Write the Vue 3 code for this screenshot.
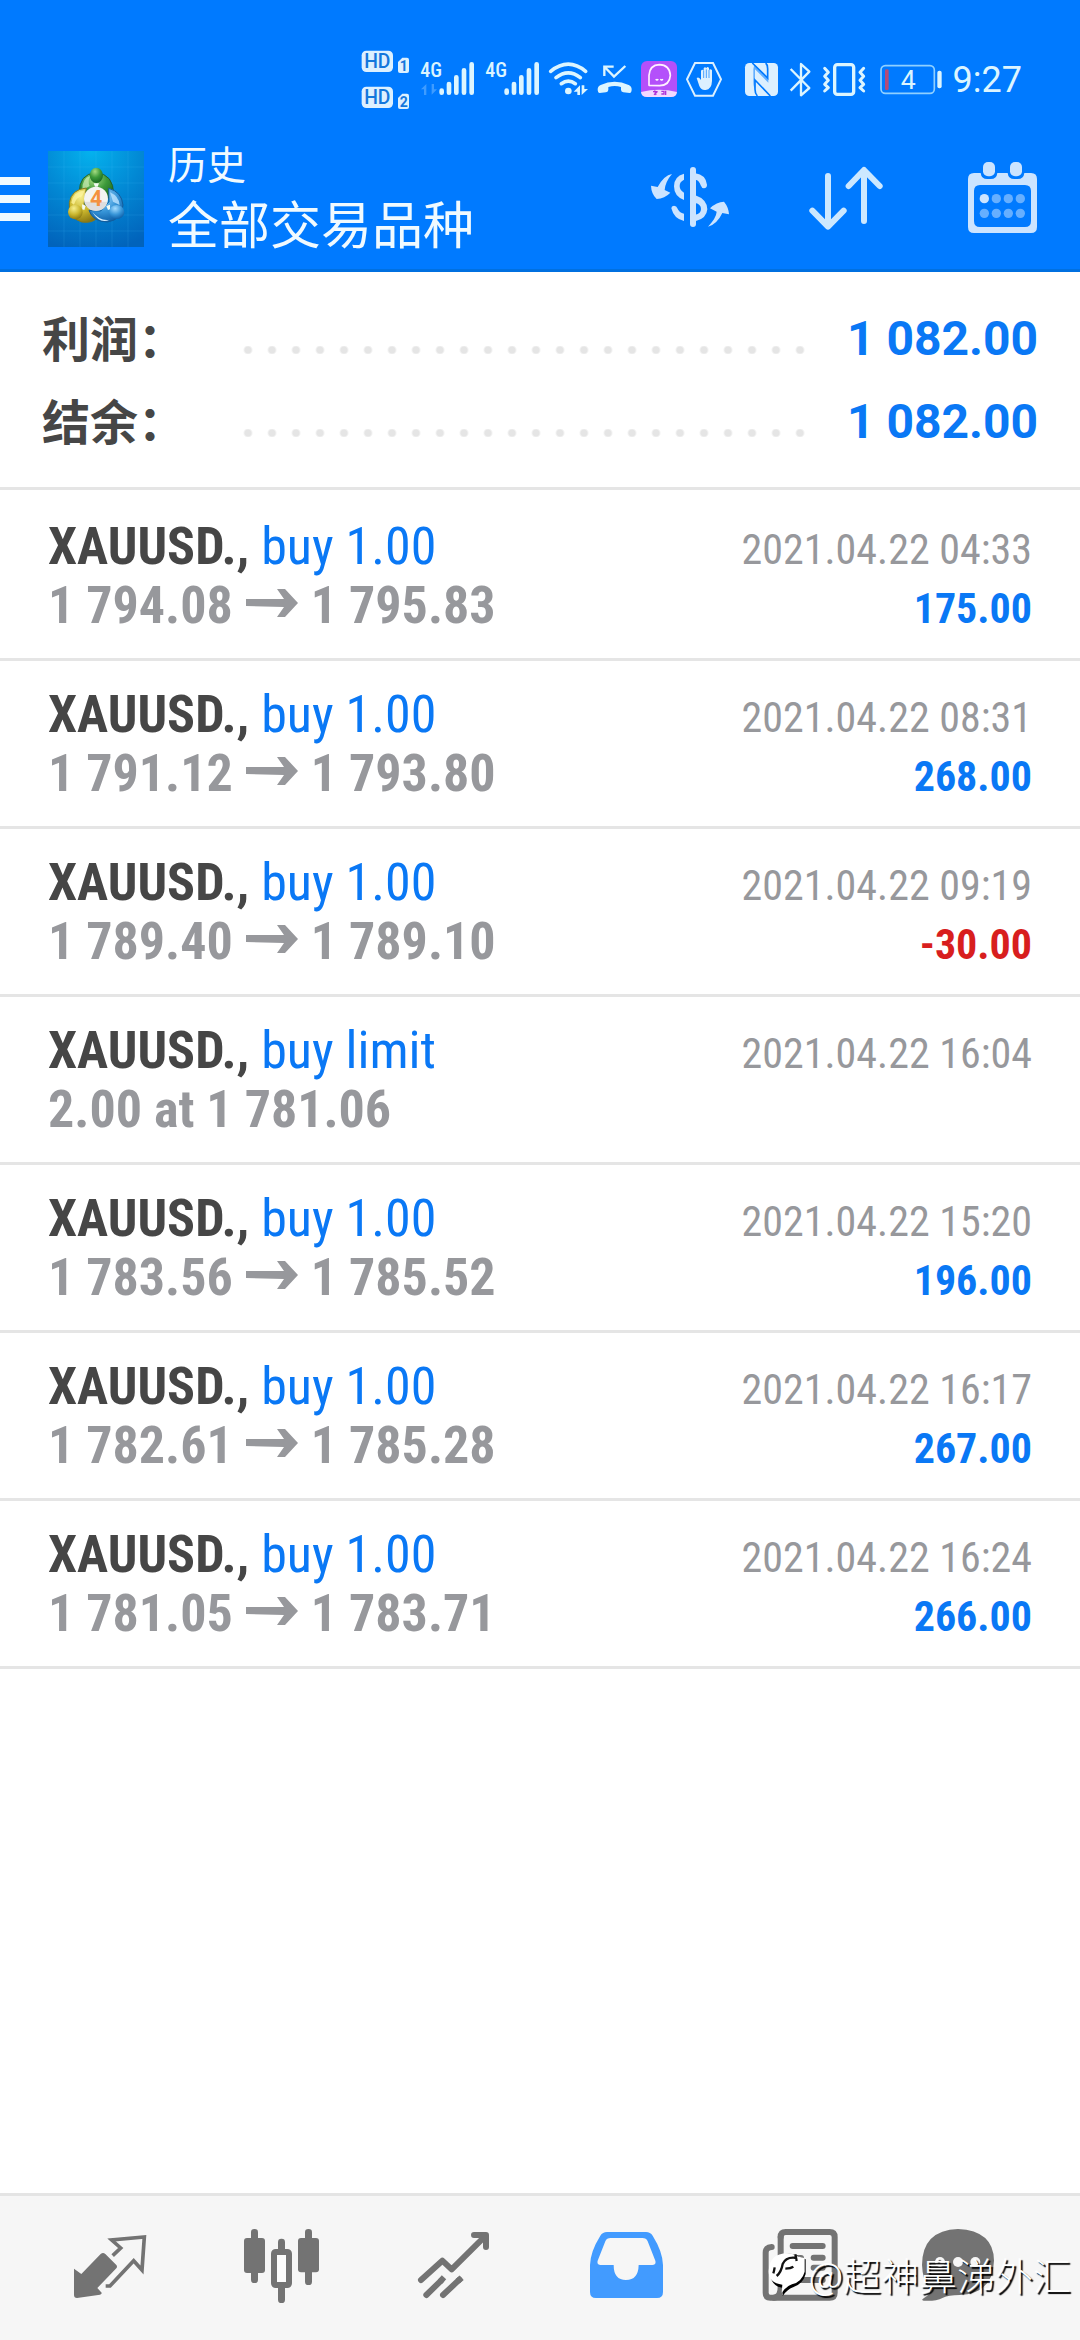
<script setup>
const summary = [
  { label: '利润', value: '1 082.00' },
  { label: '结余', value: '1 082.00' },
]

const deals = [
  { symbol: 'XAUUSD.', action: 'buy 1.00', open: '1 794.08', close: '1 795.83', time: '2021.04.22 04:33', profit: '175.00' },
  { symbol: 'XAUUSD.', action: 'buy 1.00', open: '1 791.12', close: '1 793.80', time: '2021.04.22 08:31', profit: '268.00' },
  { symbol: 'XAUUSD.', action: 'buy 1.00', open: '1 789.40', close: '1 789.10', time: '2021.04.22 09:19', profit: '-30.00' },
  { symbol: 'XAUUSD.', action: 'buy limit', open: '2.00 at 1 781.06', close: '', time: '2021.04.22 16:04', profit: '' },
  { symbol: 'XAUUSD.', action: 'buy 1.00', open: '1 783.56', close: '1 785.52', time: '2021.04.22 15:20', profit: '196.00' },
  { symbol: 'XAUUSD.', action: 'buy 1.00', open: '1 782.61', close: '1 785.28', time: '2021.04.22 16:17', profit: '267.00' },
  { symbol: 'XAUUSD.', action: 'buy 1.00', open: '1 781.05', close: '1 783.71', time: '2021.04.22 16:24', profit: '266.00' },
]
</script>

<template>
  <div class="screen">
    <header class="top">
      <div class="status">
        <!-- HD voice on both SIM cards -->
        <svg width="59" height="60" viewBox="45 60 177 180">
          <g fill="#dcf0ff">
            <rect x="62" y="62" width="94" height="64" rx="14" />
            <rect x="62" y="170" width="94" height="64" rx="14" />
            <path d="M184 83h14q6 0 6 6v34q0 6-6 6h-21q-6 0-6-6V96z" />
            <path d="M184 191h14q6 0 6 6v34q0 6-6 6h-21q-6 0-6-6v-27z" />
          </g>
          <g fill="#1377dc" class="glyph" text-anchor="middle">
            <text x="109" y="115" font-size="58" font-weight="500">HD</text>
            <text x="109" y="223" font-size="58" font-weight="500">HD</text>
            <text x="188" y="122" font-size="42" font-weight="700">1</text>
            <text x="188" y="230" font-size="42" font-weight="700">2</text>
          </g>
        </svg>
        <!-- signal, SIM 1 -->
        <svg width="65" height="60" viewBox="222 60 195 180">
          <text x="238" y="140" font-size="60" font-weight="500" fill="#dcf5ff" class="narrow">4G</text>
          <path d="M240 178l16-16v33h-7v-17zM288 178l-16 16v-32h7v16z" fill="#3f9cff" />
          <path d="M302 182v6M324 162v26M346 142v46M369 121v67M392 103v85" stroke="#dcf5ff" stroke-width="14" stroke-linecap="round" />
        </svg>
        <!-- signal, SIM 2 -->
        <svg width="63" height="60" viewBox="417 60 189 180">
          <text x="433" y="140" font-size="60" font-weight="500" fill="#dcf5ff" class="narrow">4G</text>
          <path d="M497 182v6M519 162v26M541 142v46M564 121v67M587 103v85" stroke="#dcf5ff" stroke-width="14" stroke-linecap="round" />
        </svg>
        <!-- wifi -->
        <svg width="50" height="60" viewBox="606 60 150 180">
          <g fill="none" stroke="#dcf5ff" stroke-width="11" stroke-linecap="round">
            <path d="M629 124q53-43 105 0M645 143q37-29 73 0M661 161q21-15 42 0" />
          </g>
          <circle cx="682" cy="183" r="10" fill="#dcf5ff" />
          <path d="M698 185l19-19v29h-8v-10zM741 177l-19 18v-29h8v11z" fill="#dcf5ff" />
        </svg>
        <!-- missed call -->
        <svg width="44" height="60" viewBox="756 60 132 180">
          <path d="M790 138v-28h28M791 111l28 29 34-32" fill="none" stroke="#dcf5ff" stroke-width="7" />
          <path d="M770 178q0-9 9-13q42-20 84 0q9 4 9 13q0 11-6 11l-19-2q-7-1-7-8v-8q-19-6-38 0v8q0 7-7 8l-19 2q-6 0-6-11z" fill="#dcf5ff" />
        </svg>
        <!-- messenger app -->
        <svg width="44" height="60" viewBox="888 60 132 180">
          <rect x="900" y="93" width="108" height="108" rx="18" fill="#b450fa" />
          <path d="M900 186q54-14 108 0q-1 15-18 15h-72q-17 0-18-15z" fill="#f2d8ff" />
          <path d="M924 166v-30q2-31 31-32q31 1 33 32q-2 30-32 31z" fill="none" stroke="#fff0ff" stroke-width="5" stroke-linejoin="round" />
          <path d="M944 148q4 4 8 0M958 148q4 4 8 0" fill="none" stroke="#fff" stroke-width="4" />
          <path d="M936 185h14M941 181l4 14M939 194l9-8M961 184h8v8h-8M974 182v13" stroke="#ad35d8" stroke-width="4" fill="none" />
        </svg>
        <!-- blocker: hand in hexagon -->
        <svg width="52" height="60" viewBox="1020 60 156 180">
          <path d="M1062 99h54l24 49-24 49h-54l-24-49z" fill="none" stroke="#dcf0ff" stroke-width="6" />
          <path d="M1067 144q7-5 13 6v-28q4-6 8 0v-7q4-6 8 0v-1q4-6 8 0v6q5-5 9 1v32q-1 25-19 27q-13 2-19-12z" fill="#dcf0ff" />
          <path d="M1088 122v22M1096 118v26M1104 120v24" stroke="#007aff" stroke-width="2" />
        </svg>
        <!-- NFC -->
        <svg width="51" height="60" viewBox="96 60 153 180">
          <rect x="132" y="99" width="99" height="99" rx="13" fill="#dcf0ff" />
          <path d="M154 99l46 45v-28q0-12-6-17M208 198l-46-48v28q0 13 7 20" fill="none" stroke="#007aff" stroke-width="5" />
          <path d="M160 103l42 43v12l-40-40v58q-5-5-5-20v-38z" fill="#007aff" opacity=".55" />
        </svg>
        <!-- bluetooth -->
        <svg width="33" height="60" viewBox="249 60 99 180">
          <path d="M269 117l56 57-25 22v-94l25 23-56 57" fill="none" stroke="#dcf5ff" stroke-width="7" stroke-linejoin="round" />
        </svg>
        <!-- vibrate -->
        <svg width="56" height="60" viewBox="348 60 168 180">
          <rect x="401" y="104" width="57" height="89" rx="8" fill="none" stroke="#dcf5ff" stroke-width="10" />
          <path d="M371 115l11 12-11 12 11 12-11 12 11 10-11 10M488 115l-11 12 11 12-11 12 11 12-11 10 11 10" fill="none" stroke="#dcf5ff" stroke-width="9" stroke-linecap="round" stroke-linejoin="round" />
        </svg>
        <!-- battery -->
        <svg width="74" height="60" viewBox="516 60 222 180">
          <rect x="540" y="107" width="160" height="83" rx="13" fill="none" stroke="#8fd0ff" stroke-width="5" />
          <rect x="709" y="122" width="13" height="53" rx="6" fill="#dcf5ff" />
          <rect x="552" y="118" width="11" height="62" rx="4" fill="#b54b76" />
          <text x="622" y="177" font-size="80" fill="#dcf5ff" text-anchor="middle" class="glyph">4</text>
        </svg>
        <span class="clock">9:27</span>
      </div>

      <div class="bar">
        <button class="menu" aria-label="菜单"><i></i><i></i><i></i></button>
        <svg class="logo" width="96" height="96" viewBox="144 60 288 288">
          <defs>
            <radialGradient id="sky" cx=".45" cy="0" r="1.05">
              <stop offset="0" stop-color="#04b2ee" />
              <stop offset=".5" stop-color="#0288d4" />
              <stop offset="1" stop-color="#0163bb" />
            </radialGradient>
            <radialGradient id="green" cx=".4" cy=".25" r=".8"><stop offset="0" stop-color="#a5dc82" /><stop offset=".5" stop-color="#3d9a3a" /><stop offset="1" stop-color="#16631f" /></radialGradient>
            <radialGradient id="gold" cx=".4" cy=".25" r=".8"><stop offset="0" stop-color="#f7ef8c" /><stop offset=".55" stop-color="#c9b52d" /><stop offset="1" stop-color="#857310" /></radialGradient>
            <radialGradient id="blue" cx=".4" cy=".25" r=".8"><stop offset="0" stop-color="#a4dcff" /><stop offset=".55" stop-color="#3795d8" /><stop offset="1" stop-color="#0b5ba4" /></radialGradient>
          </defs>
          <rect x="144" y="60" width="288" height="288" fill="url(#sky)" />
          <path d="M192 60v288M240 60v288M288 60v288M336 60v288M384 60v288M144 108h288M144 156h288M144 204h288M144 252h288M144 300h288" stroke="#5cc4f5" stroke-opacity=".22" stroke-width="2" />
          <path d="M238 187q-2-58 50-62q53 4 53 66l-24 15-28-38-30 16z" fill="url(#green)" stroke="#235f2c" stroke-width="3" />
          <path d="M247 178q-1-38 24-43q-9 15-2 30z" fill="#c9ecb4" opacity=".75" />
          <path d="M259 171q-45 4-51 44q-5 45 37 58q33 5 48-14l-19-25-22-14z" fill="url(#gold)" stroke="#83791d" stroke-width="3" />
          <path d="M214 215q6-34 41-37l-9 18q-18 3-24 25z" fill="#fff6a0" opacity=".75" />
          <path d="M326 172q39 10 43 50q-3 45-47 51q-44-1-55-35l35 2 25-28z" fill="url(#blue)" stroke="#125d9c" stroke-width="3" />
          <path d="M330 184q27 12 29 38l-20-10z" fill="#bde4ff" opacity=".8" />
          <path d="M277 243q23 28 52 23q-30 14-52-23z" fill="#d6efff" />
          <ellipse cx="289" cy="133" rx="20" ry="23" fill="url(#green)" />
          <ellipse cx="226" cy="243" rx="22" ry="22" fill="url(#gold)" />
          <ellipse cx="350" cy="243" rx="23" ry="21" fill="url(#blue)" />
          <path d="M281 157h16l-4 10h-8zM246 220l11 4-4 13-6-2zM330 221l-11 4 5 12 6-2z" fill="#f4fbf4" />
          <circle cx="288" cy="203" r="36" fill="#f4f4f2" />
          <path d="M254 212h68q-7 27-34 27t-34-27z" fill="#dedede" />
          <text x="288" y="226" font-size="64" font-weight="700" fill="#f4923f" text-anchor="middle" class="glyph">4</text>
        </svg>
        <div class="titles">
          <h1>历史</h1>
          <p>全部交易品种</p>
        </div>
        <div class="actions">
          <button aria-label="交易品种">
            <svg width="96" height="96" viewBox="66 60 288 288" fill="#cce4ff">
              <path d="M156 129q-24 4-43 39l-20-4q1 25 17 40q24-1 41-19l-17-8q2-25 22-48z" />
              <path d="M264 287q25-27 26-45l-20-10q20-20 42-20q14 17 15 38l-20-4q-16 34-43 41z" />
              <rect x="210" y="108" width="18" height="180" rx="9" />
              <path d="M192 128v18q-13 6-13 19t13 20v22q-30-11-30-41 0-30 30-38z" />
              <path d="M154 232q0-7 8-8 8 0 10 8 6 14 20 16v22q-30-6-38-38z" />
              <path d="M226 127q31 4 35 34 0 10-9 11-7 0-10-9-4-15-16-17zM226 193q35 12 36 42-2 28-36 36v-20q17-3 17-17t-17-18z" />
            </svg>
          </button>
          <button aria-label="排序">
            <svg width="96" height="96" viewBox="534 60 288 288" fill="none" stroke="#cce8ff" stroke-width="18" stroke-linecap="round" stroke-linejoin="round">
              <path d="M624 135v151M577 239l47 48 47-48" />
              <path d="M732 270V119M686 165l46-48 47 48" />
            </svg>
          </button>
          <button aria-label="日期">
            <svg width="96" height="96" viewBox="1002 60 288 288">
              <path fill="#cce4ff" fill-rule="evenodd" d="M1062 126h20q2 18 20 18h10q18 0 20-18h31q2 18 20 18h10q18 0 20-18h20q18 0 18 18v144q0 18-18 18h-171q-18 0-18-18V144q0-18 18-18zM1080 162q-18 0-18 18v90q0 18 18 18h135q18 0 18-18v-90q0-18-18-18z" />
              <rect x="1089" y="93" width="36" height="43" rx="15" fill="#cce4ff" />
              <rect x="1170" y="93" width="36" height="43" rx="15" fill="#cce4ff" />
              <g fill="#66afff">
                <circle cx="1093" cy="203" r="14" fill="#cce4ff" /><circle cx="1129" cy="203" r="14" /><circle cx="1165" cy="203" r="14" /><circle cx="1201" cy="203" r="14" />
                <circle cx="1093" cy="247" r="14" /><circle cx="1129" cy="247" r="14" /><circle cx="1165" cy="247" r="14" /><circle cx="1201" cy="247" r="14" />
              </g>
            </svg>
          </button>
        </div>
      </div>
    </header>

    <main>
      <dl class="summary">
        <div v-for="item in summary" :key="item.label" class="total">
          <dt>{{ item.label }}：</dt>
          <dd><span class="leader"></span>{{ item.value }}</dd>
        </div>
      </dl>

      <ul class="deals">
        <li v-for="deal in deals" :key="deal.time">
          <div class="line">
            <span><b class="symbol">{{ deal.symbol }},</b> <span class="action">{{ deal.action }}</span></span>
            <time>{{ deal.time }}</time>
          </div>
          <div class="line">
            <span class="prices">
              <span>{{ deal.open }}</span>
              <template v-if="deal.close">
                <svg width="52" height="34" viewBox="0 0 52 34" role="img" aria-label="→">
                  <path d="M0 10h38l-7-10h8l13 14-13 14h-8l7-10-38-1z" fill="#97989c" />
                </svg>
                <span>{{ deal.close }}</span>
              </template>
            </span>
            <span v-if="deal.profit" class="profit" :class="{ loss: deal.profit.startsWith('-') }">{{ deal.profit }}</span>
          </div>
        </li>
      </ul>
    </main>

    <nav class="tabs">
      <button aria-label="行情">
        <svg width="96" height="96" viewBox="186 120 288 288" fill="#737373">
          <path d="M222 266l22 16 58-60q7-6 14 0l33 33q4 5 0 10l-57 59 13 14q1 5-5 6l-69 10q-9 0-9-9z" />
          <path d="M338 227l24-23-27-24 98-9-7 99-25-28-71 76h-13" fill="none" stroke="#737373" stroke-width="11" />
        </svg>
      </button>
      <button aria-label="图表">
        <svg width="96" height="96" viewBox="702 120 288 288" fill="#737373">
          <rect x="732" y="174" width="63" height="105" rx="9" />
          <rect x="753" y="147" width="21" height="162" rx="10" />
          <rect x="894" y="174" width="63" height="103" rx="9" />
          <rect x="915" y="147" width="21" height="168" rx="10" />
          <rect x="834" y="176" width="21" height="50" rx="10" />
          <rect x="834" y="310" width="21" height="59" rx="10" />
          <rect x="822" y="216" width="45" height="99" rx="5" fill="#fcfcfc" stroke="#737373" stroke-width="18" />
        </svg>
      </button>
      <button aria-label="交易">
        <svg width="96" height="96" viewBox="48 120 288 288" fill="none" stroke="#737373" stroke-width="18" stroke-linecap="round" stroke-linejoin="round">
          <path d="M93 300l64-58 28 26 102-101M252 165h36v36" />
          <path d="M109 345l45-44M159 345l49-46" />
          <path d="M150 305l12-13M203 304l12-11" stroke-linecap="butt" />
        </svg>
      </button>
      <button aria-label="历史" aria-current="page">
        <svg width="96" height="96" viewBox="564 120 288 288">
          <path fill="#429bff" fill-rule="evenodd" d="M651 156h117q13 0 20 11 30 48 31 88v81q0 18-18 18H618q-18 0-18-18v-81q1-40 31-88 7-11 20-11zM662 174q-12 0-16 10l-23 58q-3 13 9 13h39q0 45 37 45t38-45h41q12 0 9-13l-23-58q-4-10-16-10z" />
        </svg>
      </button>
      <button aria-label="新闻">
        <svg width="96" height="96" viewBox="90 120 288 288" fill="none" stroke="#737373" stroke-width="18" stroke-linecap="round" stroke-linejoin="round">
          <path d="M182 171q0-15 15-15h132q15 0 15 15v167q0 15-15 15H151q-14 0-14-15V218q0-16 18-17" />
          <path d="M182 171v150q0 30-20 32M218 198h90M218 234h25v35h-25zM281 233h27M281 263h27M218 300h90" />
        </svg>
      </button>
      <button aria-label="消息">
        <svg width="96" height="96" viewBox="606 120 288 288">
          <path d="M714 147q107 5 108 95-3 99-103 103-34 0-50 8-25 12-58 9-10-2 2-9 22-13 17-24-22-26-24-74 1-104 108-108z" fill="#737373" />
          <g fill="#f6f6f6"><circle cx="660" cy="246" r="15" /><circle cx="714" cy="246" r="15" /><circle cx="766" cy="246" r="15" /></g>
        </svg>
      </button>
      <div class="watermark">
        <svg width="38" height="44" viewBox="136 238 114 132">
          <path d="M143 300q2-57 56-57 20 1 30 9l20 8v44q-8 30-38 40-17 6-31 26l2-24q-39-6-39-46z" fill="#000" />
          <path d="M138 296q2-54 56-54 20 1 30 9l22 6v40q-8 30-38 38-17 6-31 25l2-24q-41-4-41-40z" fill="#fff" />
          <path d="M222 256q-32-5-42 18-4 24-18 36M156 284q-2 12-4 18M188 288q16 0 24-6M218 245l4 20" fill="none" stroke="#111" stroke-width="7" />
        </svg>
        <span>@超神鼻涕外汇</span>
      </div>
    </nav>
  </div>
</template>

<style>
body {
  margin: 0;
  background: #fff;
}
</style>

<style scoped>
.screen {
  display: flex;
  flex-direction: column;
  min-height: 100vh;
  font-family: Roboto, "Noto Sans CJK SC", sans-serif;
  color: #464646;
}
h1, p, dl, dd, ul {
  margin: 0;
  padding: 0;
}
svg {
  display: block;
  flex: none;
}
button {
  display: block;
  padding: 0;
  border: 0;
  background: none;
}
.glyph {
  font-family: Roboto, sans-serif;
}
.narrow {
  font-family: "Roboto Condensed", Roboto, sans-serif;
}
.top {
  background: #007aff;
  border-bottom: 3px solid #0070e0;
  color: #f0faff;
}
.status {
  display: flex;
  justify-content: flex-end;
  align-items: center;
  padding: 50px 58px 0 0;
}
.clock {
  padding-left: 6px;
  font-size: 36px;
  line-height: 60px;
  color: #dcf5ff;
}
.bar {
  display: flex;
  align-items: center;
  padding: 28px 30px 9px 0;
}
.menu {
  display: flex;
  flex-direction: column;
  gap: 10px;
  width: 30px;
}
.menu i {
  height: 8px;
  background: #f0faff;
}
.logo {
  margin: 0 24px 0 18px;
}
.titles {
  flex: 1;
}
h1 {
  font-size: 39px;
  font-weight: 400;
  line-height: 56px;
}
.titles p {
  font-size: 51px;
  line-height: 66px;
}
.actions {
  display: flex;
  gap: 60px;
}
.summary {
  padding: 25px 42px 24px;
  border-bottom: 3px solid #e5e5e5;
}
.total {
  display: flex;
  align-items: center;
  height: 83px;
}
dt {
  width: 194px;
  padding-bottom: 6px;
  font-size: 48px;
  font-weight: 700;
}
dd {
  display: flex;
  flex: 1;
  align-items: center;
  font-size: 48px;
  font-weight: 700;
  color: #0a78f5;
}
.leader {
  flex: 1;
  height: 8px;
  margin: 22px 32px 0 0;
  background: radial-gradient(circle at 12px 4px, #e5e5e5 3px, transparent 5px) 0 0 / 24px 8px repeat-x;
}
.deals {
  padding-top: 3px;
  list-style: none;
  font-family: "Roboto Condensed", Roboto, sans-serif;
  font-size: 52px;
}
.deals li {
  padding: 24px 48px 23px;
  border-bottom: 3px solid #e5e5e5;
}
.line {
  display: flex;
  justify-content: space-between;
  align-items: baseline;
  height: 59px;
  line-height: 59px;
  white-space: nowrap;
}
.action, .profit {
  color: #0a78f5;
}
.prices {
  display: flex;
  align-items: baseline;
  gap: 13px;
  font-weight: 700;
  color: #97989c;
}
time, .profit {
  font-size: 42px;
  line-height: 52px;
}
time {
  color: #97989c;
}
.profit {
  font-weight: 700;
}
.loss {
  color: #d81e1e;
}
.tabs {
  position: relative;
  display: flex;
  margin-top: auto;
  padding: 24px;
  border-top: 3px solid #e4e4e4;
  background: #f6f6f6;
}
.tabs button {
  display: flex;
  flex: 1;
  justify-content: center;
}
.watermark {
  position: absolute;
  right: 9px;
  bottom: 38px;
  display: flex;
  align-items: center;
  gap: 2px;
  font-family: "Noto Sans CJK SC", sans-serif;
  font-size: 38px;
  font-weight: 300;
  line-height: 56px;
  color: #fff;
  text-shadow: 2px 2px 1px #000;
  pointer-events: none;
}
</style>
